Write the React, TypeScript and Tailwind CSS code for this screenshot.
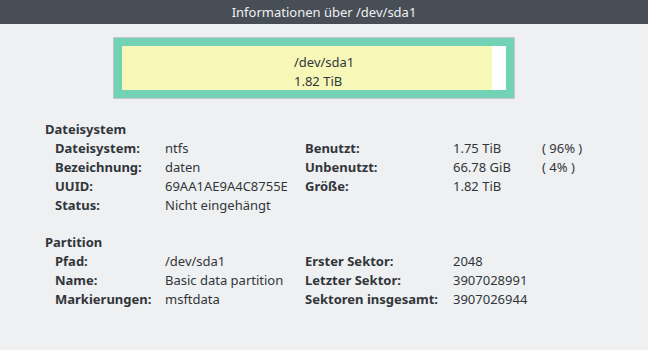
const fsRows = [
  ["Dateisystem:", "ntfs", "Benutzt:", "1.75 TiB", "( 96% )"],
  ["Bezeichnung:", "daten", "Unbenutzt:", "66.78 GiB", "( 4% )"],
  ["UUID:", "69AA1AE9A4C8755E", "Größe:", "1.82 TiB", ""],
  ["Status:", "Nicht eingehängt", "", "", ""],
];

const partRows = [
  ["Pfad:", "/dev/sda1", "Erster Sektor:", "2048", ""],
  ["Name:", "Basic data partition", "Letzter Sektor:", "3907028991", ""],
  ["Markierungen:", "msftdata", "Sektoren insgesamt:", "3907026944", ""],
];

function Section({ title, rows }: { title: string; rows: string[][] }) {
  return (
    <div>
      <div className="font-bold h-[19px]">{title}</div>
      <div className="ml-[10px] grid grid-cols-[110px_140px_148px_89px_auto]">
        {rows.map((r, i) => (
          <div key={i} className="contents">
            <span className="font-bold h-[19px] whitespace-nowrap">{r[0]}</span>
            <span className="whitespace-nowrap">{r[1]}</span>
            <span className="font-bold whitespace-nowrap">{r[2]}</span>
            <span className="whitespace-nowrap">{r[3]}</span>
            <span className="whitespace-nowrap">{r[4]}</span>
          </div>
        ))}
      </div>
    </div>
  );
}

export default function App() {
  return (
    <div className="w-[648px] h-[350px] bg-[#eff0f1] text-[#31363b] text-[13px] leading-[19px] font-['Noto_Sans',sans-serif] overflow-hidden">
      <div className="h-6 bg-[#474e56] text-[#eff0f1] flex items-center justify-center">
        Informationen über /dev/sda1
      </div>

      <div className="mt-[13px] ml-[113px] w-[402px] h-[62px] border border-[#c6c6c6] bg-[#71d3b3] p-2">
        <div className="flex h-full bg-white">
          <div className="w-[370px] bg-[#f7f7b8] flex flex-col pl-[172px] pt-[7px] whitespace-nowrap">
            <span>/dev/sda1</span>
            <span>1.82 TiB</span>
          </div>
        </div>
      </div>

      <div className="mt-[21px] ml-[45px] flex flex-col gap-[18px]">
        <Section title="Dateisystem" rows={fsRows} />
        <Section title="Partition" rows={partRows} />
      </div>
    </div>
  );
}
